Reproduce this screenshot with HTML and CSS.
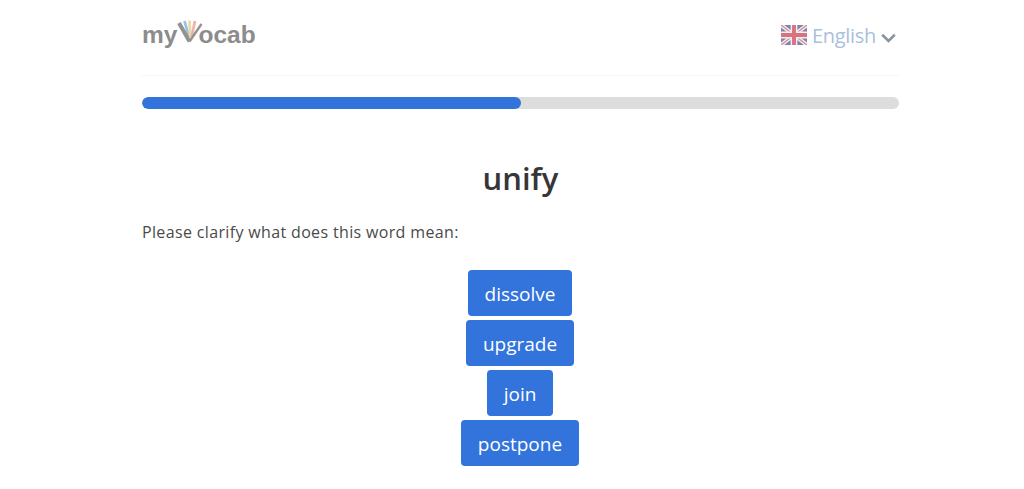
FILE: index.html
```html
<!DOCTYPE html>
<html lang="en">
<head>
    <meta charset="UTF-8">
    <title>myVocab</title>
    <link rel="stylesheet" href="styles.css">
</head>
<body>
    <div class="container">
        <!-- Header -->
        <div class="header">
            <div class="logo">
                <span>my</span>
                <svg class="logo-v" width="26" height="23" viewBox="0 0 26 23">
                    <path d="M7.5 1 L12 17" stroke="#9cc3e0" stroke-width="2.8" fill="none"/>
                    <path d="M12.5 0.5 L13.2 17" stroke="#eed9a8" stroke-width="2.8" fill="none"/>
                    <path d="M18 1 L14.5 17" stroke="#eeb4a6" stroke-width="2.8" fill="none"/>
                    <path d="M2 3 L12.5 21.5" stroke="#929292" stroke-width="4" fill="none"/>
                    <path d="M24.5 4 L12.5 21.5" stroke="#929292" stroke-width="2.4" fill="none"/>
                </svg>
                <span class="logo-rest">ocab</span>
            </div>
            <div class="lang">
                <svg class="flag" width="26" height="20" viewBox="0 0 27 20" preserveAspectRatio="none">
                    <rect width="27" height="20" fill="#7d83ad"/>
                    <path d="M0 0 L27 20 M27 0 L0 20" stroke="#f3eef0" stroke-width="4"/>
                    <path d="M0 0 L27 20 M27 0 L0 20" stroke="#d98a96" stroke-width="1.4"/>
                    <path d="M13.5 0 V20 M0 10 H27" stroke="#f3eef0" stroke-width="7"/>
                    <path d="M13.5 0 V20 M0 10 H27" stroke="#d9717f" stroke-width="4"/>
                </svg>
                <span class="lang-name">English</span>
                <svg class="chevron" width="15" height="10" viewBox="0 0 15 10">
                    <path d="M1.2 1.8 L7.5 8 L13.8 1.8" stroke="#8a93a0" stroke-width="2.6" fill="none"/>
                </svg>
            </div>
        </div>

        <!-- Progress -->
        <div class="progress">
            <div class="progress-bar" style="width: 50%"></div>
        </div>

        <h1 class="word">unify</h1>
        <p class="question">Please clarify what does this word mean:</p>

        <!-- Answers -->
        <div class="answers">
            <button class="answer">dissolve</button>
            <button class="answer">upgrade</button>
            <button class="answer">join</button>
            <button class="answer">postpone</button>
        </div>
    </div>
</body>
</html>
```

FILE: styles.css
```css
body {
    margin: 0;
    background-color: #fff;
    font-family: "Open Sans", "Noto Sans", sans-serif;
    color: #444;
}
.container {
    width: 757px;
    margin-left: 142px;
}
.header {
    display: flex;
    justify-content: space-between;
    align-items: center;
    height: 75px;
    border-bottom: 1px solid #f5f5f5;
}
.logo {
    display: flex;
    align-items: center;
    font-family: "Liberation Sans", sans-serif;
    font-weight: bold;
    font-size: 24.5px;
    color: #8c8c8c;
    margin-bottom: 6px;
}
.logo-v {
    margin: -6px -5px 0 0;
}
.lang {
    display: flex;
    align-items: center;
    font-size: 20px;
    color: #a9bfdc;
    margin-bottom: 5px;
}
.flag {
    margin-right: 5px;
}
.lang-name {
    letter-spacing: -0.3px;
}
.chevron {
    margin: 5px 3px 0 5px;
}
.progress {
    height: 12px;
    margin-top: 21px;
    background-color: #ddd;
    border-radius: 6px;
    overflow: hidden;
}
.progress-bar {
    height: 100%;
    background-color: #3273dc;
    border-radius: 6px;
}
.word {
    margin: 47px 0 0;
    text-align: center;
    font-size: 31px;
    line-height: 44px;
    font-weight: 600;
    color: #363636;
}
.question {
    margin: 20px 0 0;
    font-size: 16px;
    letter-spacing: 0.35px;
    line-height: 24px;
    color: #4a4a4a;
}
.answers {
    display: flex;
    flex-direction: column;
    align-items: center;
    gap: 4px;
    margin-top: 26px;
}
.answer {
    height: 46px;
    padding: 2px 17px 0;
    margin-right: 1px;
    border: none;
    border-radius: 4px;
    background-color: #3273dc;
    color: #fff;
    font-family: inherit;
    font-size: 19px;
}
```
